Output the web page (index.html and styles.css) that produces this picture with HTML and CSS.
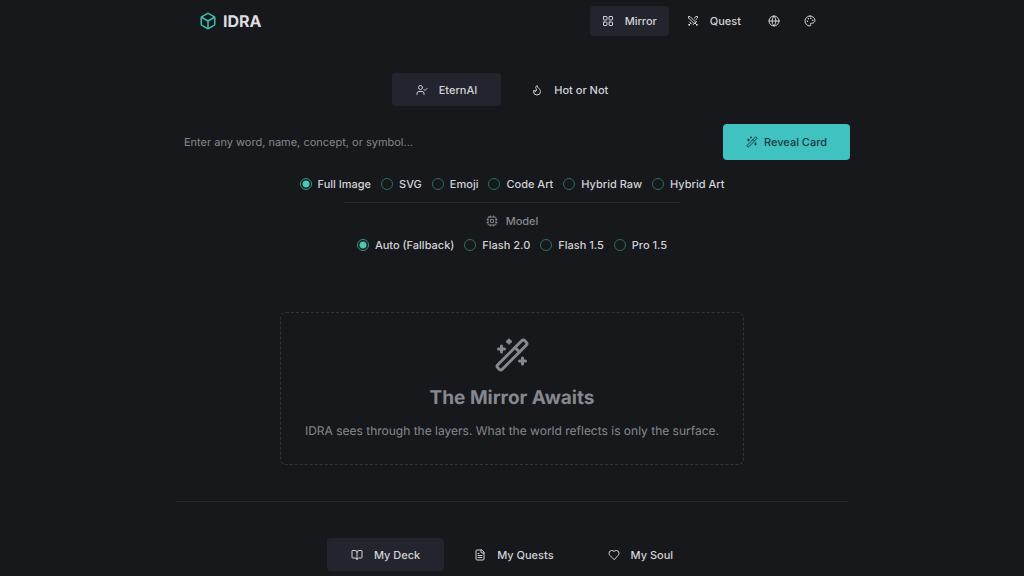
FILE: index.html
```html
<!DOCTYPE html>
<html lang="en">
<head>
<meta charset="utf-8">
<meta name="viewport" content="width=device-width, initial-scale=1">
<title>IDRA</title>
<link rel="stylesheet" href="styles.css">
</head>
<body>
<header class="header">
  <a class="brand" href="#">
    <svg class="icon icon-brand" viewBox="0 0 24 24"><path d="M21 8a2 2 0 0 0-1-1.73l-7-4a2 2 0 0 0-2 0l-7 4A2 2 0 0 0 3 8v8a2 2 0 0 0 1 1.73l7 4a2 2 0 0 0 2 0l7-4A2 2 0 0 0 21 16Z"/><path d="m3.3 7 8.7 5 8.7-5"/><path d="M12 22V12"/></svg>
    <span>IDRA</span>
  </a>
  <nav class="nav">
    <button class="btn nav-btn active" type="button">
      <svg class="icon" viewBox="0 0 24 24"><rect width="7" height="7" x="3" y="3" rx="1"/><rect width="7" height="7" x="14" y="3" rx="1"/><rect width="7" height="7" x="14" y="14" rx="1"/><rect width="7" height="7" x="3" y="14" rx="1"/></svg>
      Mirror
    </button>
    <button class="btn nav-btn" type="button">
      <svg class="icon" viewBox="0 0 24 24"><path d="M14.5 17.5 3 6V3h3l11.5 11.5"/><path d="m13 19 6-6"/><path d="m16 16 4 4"/><path d="m19 21 2-2"/><path d="M14.5 6.5 18 3h3v3l-3.5 3.5"/><path d="m5 14 4 4"/><path d="m7 17-3 3"/><path d="m3 19 2 2"/></svg>
      Quest
    </button>
    <button class="btn icon-btn" type="button" aria-label="Language">
      <svg class="icon" viewBox="0 0 24 24"><circle cx="12" cy="12" r="10"/><path d="M12 2a14.5 14.5 0 0 0 0 20 14.5 14.5 0 0 0 0-20"/><path d="M2 12h20"/></svg>
    </button>
    <button class="btn icon-btn" type="button" aria-label="Theme">
      <svg class="icon" viewBox="0 0 24 24"><circle cx="13.5" cy="6.5" r=".5"/><circle cx="17.5" cy="10.5" r=".5"/><circle cx="8.5" cy="7.5" r=".5"/><circle cx="6.5" cy="12.5" r=".5"/><path d="M12 2C6.5 2 2 6.5 2 12s4.5 10 10 10c.926 0 1.648-.746 1.648-1.688 0-.437-.18-.835-.437-1.125-.29-.289-.438-.652-.438-1.125a1.64 1.64 0 0 1 1.668-1.668h1.996c3.051 0 5.555-2.503 5.555-5.554C21.965 6.012 17.461 2 12 2z"/></svg>
    </button>
  </nav>
</header>
<main class="main">
  <div class="tabs">
    <button class="btn tab active" type="button">
      <svg class="icon" viewBox="0 0 24 24"><path d="M16 21v-2a4 4 0 0 0-4-4H6a4 4 0 0 0-4 4v2"/><circle cx="9" cy="7" r="4"/><path d="m16 11 2 2 4-4"/></svg>
      EternAI
    </button>
    <button class="btn tab" type="button">
      <svg class="icon" viewBox="0 0 24 24"><path d="M8.5 14.5A2.5 2.5 0 0 0 11 12c0-1.38-.5-2-1-3-1.072-2.143-.224-4.054 2-6 .5 2.5 2 4.9 4 6.5 2 1.6 3 3.5 3 5.5a7 7 0 1 1-14 0c0-1.153.433-2.294 1-3a2.5 2.5 0 0 0 2.5 2.5z"/></svg>
      Hot or Not
    </button>
  </div>
  <form class="form">
    <div class="prompt">
      <input class="prompt-input" type="text" aria-label="Prompt" placeholder="Enter any word, name, concept, or symbol...">
      <button class="btn reveal" type="button">
        <svg class="icon" viewBox="0 0 24 24"><path d="m21.64 3.64-1.28-1.28a1.21 1.21 0 0 0-1.72 0L2.36 18.64a1.21 1.21 0 0 0 0 1.72l1.28 1.28a1.2 1.2 0 0 0 1.72 0L21.64 5.36a1.2 1.2 0 0 0 0-1.72"/><path d="m14 7 3 3M5 6v4M19 14v4M10 2v2M7 8H3M21 16h-4M11 3H9"/></svg>
        Reveal Card
      </button>
    </div>
    <div class="options" role="radiogroup" aria-label="Format">
      <label class="option"><input class="radio" type="radio" name="format" checked>Full Image</label>
      <label class="option"><input class="radio" type="radio" name="format">SVG</label>
      <label class="option"><input class="radio" type="radio" name="format">Emoji</label>
      <label class="option"><input class="radio" type="radio" name="format">Code Art</label>
      <label class="option"><input class="radio" type="radio" name="format">Hybrid Raw</label>
      <label class="option"><input class="radio" type="radio" name="format">Hybrid Art</label>
    </div>
    <div class="model">
      <div class="model-title">
        <svg class="icon" viewBox="0 0 24 24"><rect width="16" height="16" x="4" y="4" rx="2"/><rect width="6" height="6" x="9" y="9" rx="1"/><path d="M15 2v2M15 20v2M2 15h2M2 9h2M20 15h2M20 9h2M9 2v2M9 20v2"/></svg>
        <span id="model-label">Model</span>
      </div>
      <div class="options" role="radiogroup" aria-labelledby="model-label">
        <label class="option"><input class="radio" type="radio" name="model" checked>Auto (Fallback)</label>
        <label class="option"><input class="radio" type="radio" name="model">Flash 2.0</label>
        <label class="option"><input class="radio" type="radio" name="model">Flash 1.5</label>
        <label class="option"><input class="radio" type="radio" name="model">Pro 1.5</label>
      </div>
    </div>
  </form>
  <section class="empty">
    <svg class="icon icon-large" viewBox="0 0 24 24"><path d="m21.64 3.64-1.28-1.28a1.21 1.21 0 0 0-1.72 0L2.36 18.64a1.21 1.21 0 0 0 0 1.72l1.28 1.28a1.2 1.2 0 0 0 1.72 0L21.64 5.36a1.2 1.2 0 0 0 0-1.72"/><path d="m14 7 3 3M5 6v4M19 14v4M10 2v2M7 8H3M21 16h-4M11 3H9"/></svg>
    <h1 class="empty-title">The Mirror Awaits</h1>
    <p class="empty-text">IDRA sees through the layers. What the world reflects is only the surface.</p>
  </section>
  <hr class="divider">
  <div class="tabs">
    <button class="btn tab active" type="button">
      <svg class="icon" viewBox="0 0 24 24"><path d="M12 7v14"/><path d="M3 18a1 1 0 0 1-1-1V4a1 1 0 0 1 1-1h5a4 4 0 0 1 4 4 4 4 0 0 1 4-4h5a1 1 0 0 1 1 1v13a1 1 0 0 1-1 1h-6a3 3 0 0 0-3 3 3 3 0 0 0-3-3z"/></svg>
      My Deck
    </button>
    <button class="btn tab" type="button">
      <svg class="icon" viewBox="0 0 24 24"><path d="M15 2H6a2 2 0 0 0-2 2v16a2 2 0 0 0 2 2h12a2 2 0 0 0 2-2V7Z"/><path d="M14 2v4a2 2 0 0 0 2 2h4M10 9H8M16 13H8M16 17H8"/></svg>
      My Quests
    </button>
    <button class="btn tab" type="button">
      <svg class="icon" viewBox="0 0 24 24"><path d="M19 14c1.49-1.46 3-3.21 3-5.5A5.5 5.5 0 0 0 16.5 3c-1.76 0-3 .5-4.5 2-1.5-1.5-2.74-2-4.5-2A5.5 5.5 0 0 0 2 8.5c0 2.3 1.5 4.05 3 5.5l7 7Z"/></svg>
      My Soul
    </button>
  </div>
</main>
</body>
</html>
```
FILE: styles.css
```css
* {
  box-sizing: border-box;
}

body {
  margin: 0;
  background: #17181c;
  color: #d2d3d6;
  font: 500 11px/16px Inter, "Liberation Sans", sans-serif;
  text-rendering: geometricPrecision;
}

.header,
.main {
  max-width: 672px;
  margin: 0 auto;
}

.header {
  display: flex;
  align-items: center;
  justify-content: space-between;
  padding: 6px 23px;
}

.brand {
  display: flex;
  align-items: center;
  gap: 6px;
  color: #dcdde0;
  font-size: 16px;
  line-height: 24px;
  font-weight: 700;
  text-decoration: none;
}

.icon {
  width: 12px;
  height: 12px;
  flex: none;
  fill: none;
  stroke: currentColor;
  stroke-width: 2;
  stroke-linecap: round;
  stroke-linejoin: round;
}

.icon-brand {
  width: 18px;
  height: 18px;
  color: #3fbfae;
}

.icon-large {
  width: 36px;
  height: 36px;
}

.nav {
  display: flex;
  gap: 6px;
}

.btn {
  display: inline-flex;
  align-items: center;
  justify-content: center;
  gap: 11px;
  border: 0;
  border-radius: 4px;
  background: transparent;
  color: inherit;
  font: inherit;
  text-rendering: inherit;
  white-space: nowrap;
  cursor: pointer;
}

.nav-btn {
  height: 30px;
  padding: 0 12px;
}

.icon-btn {
  width: 30px;
  height: 30px;
  padding: 0;
}

.tab {
  height: 33px;
  padding: 0 24px;
}

.active {
  background: #22252d;
}

.main {
  padding-top: 31px;
}

.tabs {
  display: flex;
  justify-content: center;
  gap: 6px;
}

.prompt {
  display: flex;
  align-items: center;
  gap: 12px;
  margin: 18px -2px 0 0;
}

.prompt-input {
  flex: 1;
  min-width: 0;
  height: 36px;
  padding: 0 8px;
  border: 0;
  outline: 0;
  background: transparent;
  color: inherit;
  font: inherit;
  font-weight: 400;
  text-rendering: inherit;
}

.prompt-input::placeholder {
  color: #85878d;
  opacity: 1;
}

.reveal {
  height: 36px;
  padding: 0 23px;
  gap: 6px;
  background: #40c2c1;
  color: #17393f;
}

.options {
  display: flex;
  flex-wrap: wrap;
  justify-content: center;
  gap: 10px;
}

.prompt + .options {
  margin-top: 16px;
}

.option {
  display: flex;
  align-items: center;
  gap: 6px;
}

.radio {
  appearance: none;
  width: 12px;
  height: 12px;
  margin: 0;
  border: 1px solid #27705f;
  border-radius: 50%;
}

.radio:checked {
  border-color: #329681;
  background: radial-gradient(circle, #4bc9b5 3px, transparent 4px);
}

.model {
  width: 50%;
  margin: 10px auto 0;
  padding-top: 10px;
  border-top: 1px solid #292b30;
}

.model-title {
  display: flex;
  align-items: center;
  justify-content: center;
  gap: 8px;
  margin-bottom: 8px;
  color: #85878d;
}

.empty {
  display: flex;
  flex-direction: column;
  align-items: center;
  width: fit-content;
  margin: 59px auto 0;
  padding: 24px 24px 23px;
  border: 1px dashed #34363c;
  border-radius: 6px;
  color: #85888f;
  text-align: center;
}

.empty-title {
  margin: 11px 0 9px;
  font-size: 19px;
  line-height: 28px;
  font-weight: 700;
}

.empty-text {
  margin: 0;
  font-size: 12px;
  line-height: 20px;
  font-weight: 400;
}

.divider {
  margin: 36px 0;
  border: 0;
  border-top: 1px solid #25272b;
}
```
